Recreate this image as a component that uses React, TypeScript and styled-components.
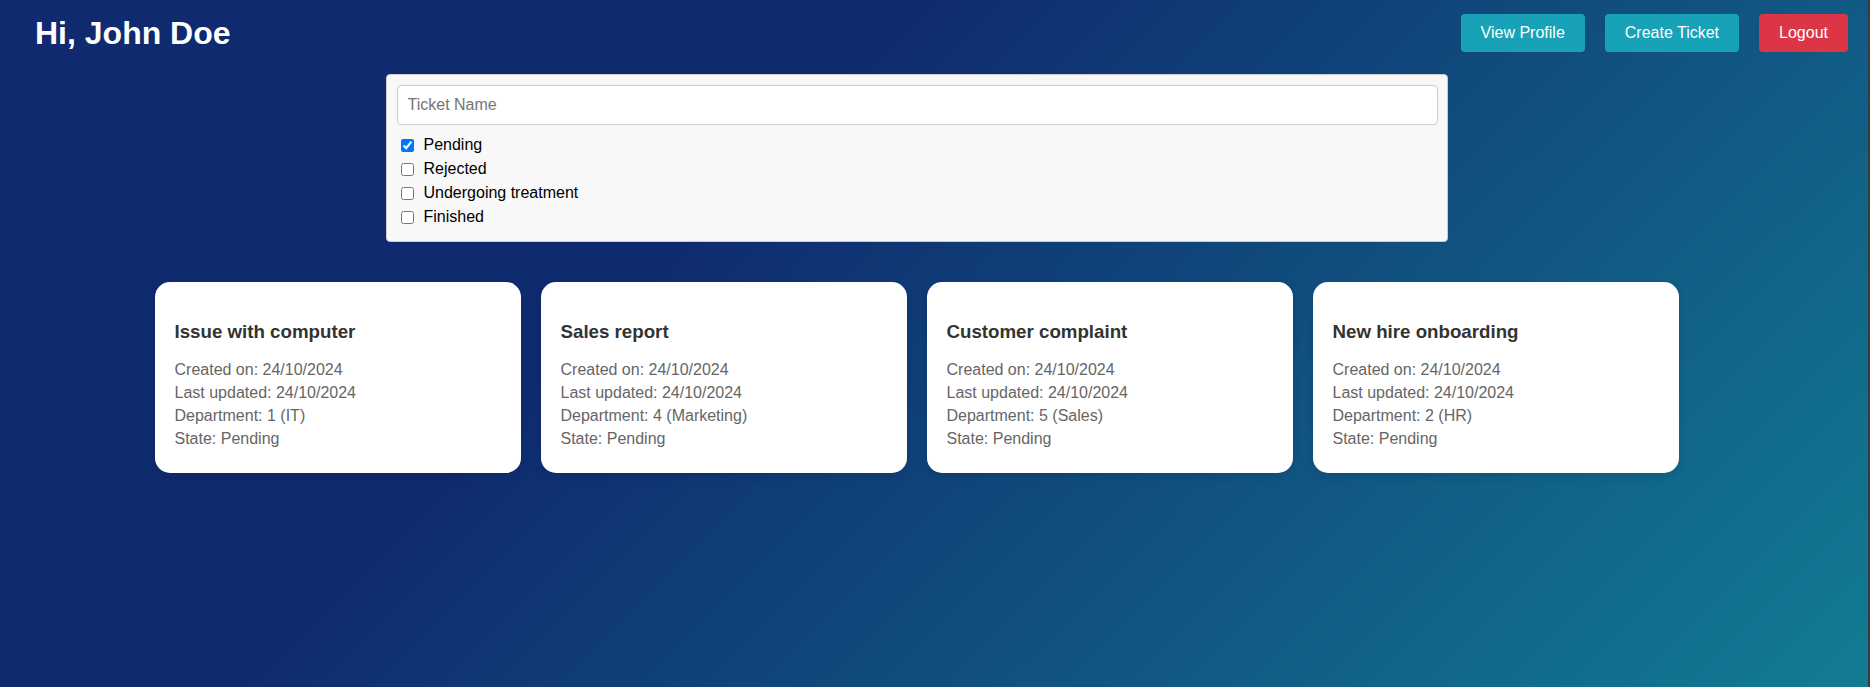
import React, { useState } from "react";
import styled, { createGlobalStyle } from "styled-components";

const GlobalStyle = createGlobalStyle`
  html, body {
    margin: 0;
    padding: 0;
    height: 100%;
  }
  body {
    font-family: "Liberation Sans", Arial, sans-serif;
    background: #3a3a3a;
  }
  * { box-sizing: border-box; }
`;

const Page = styled.div`
  min-height: 100vh;
  margin-right: 2px;
  background: linear-gradient(135deg, #0f2a6e 0%, #0f2b6f 36%, #127c93 100%);
`;

const Header = styled.header`
  display: flex;
  align-items: center;
  justify-content: space-between;
  padding: 14px 20px 0 35px;
`;

const Title = styled.h1`
  margin: 0;
  font-size: 32px;
  font-weight: bold;
  color: #ffffff;
`;

const Actions = styled.div`
  display: flex;
  gap: 20px;
`;

const Button = styled.button<{ $variant: "info" | "danger" }>`
  border: none;
  border-radius: 4px;
  padding: 10px 20px;
  font-family: "Liberation Sans", Arial, sans-serif;
  font-size: 16px;
  line-height: 18px;
  color: #ffffff;
  cursor: pointer;
  background: ${(p) => (p.$variant === "danger" ? "#dc3545" : "#17a2b8")};
`;

const Main = styled.main`
  width: 1833px;
  display: flex;
  flex-direction: column;
  align-items: center;
`;

const FilterPanel = styled.section`
  width: 1062px;
  margin-top: 22px;
  padding: 10px 9px 12px 10px;
  background: #f8f8f8;
  border: 1px solid #cccccc;
  border-radius: 4px;
`;

const SearchInput = styled.input`
  display: block;
  width: 100%;
  height: 40px;
  margin: 0 0 8px;
  padding: 0 10px;
  border: 1px solid #cccccc;
  border-radius: 4px;
  background: #ffffff;
  font-family: "Liberation Sans", Arial, sans-serif;
  font-size: 16px;
  color: #222;
  outline: none;
  &::placeholder {
    color: #757575;
  }
`;

const CheckRow = styled.label`
  display: flex;
  align-items: center;
  height: 24px;
  font-size: 16px;
  color: #000000;
  input {
    width: 13px;
    height: 13px;
    margin: 0 10px 0 4px;
  }
`;

const CardRow = styled.div`
  display: flex;
  gap: 20px;
  margin-top: 40px;
`;

const Card = styled.article`
  width: 366px;
  height: 191px;
  padding: 20px 20px;
  background: #ffffff;
  border-radius: 15px;
  box-shadow: 0 4px 8px rgba(0, 0, 0, 0.1);
`;

const CardTitle = styled.h3`
  margin: 18.72px 0;
  font-size: 18.72px;
  font-weight: bold;
  color: #333333;
`;

const CardLine = styled.p`
  margin: 5px 0;
  font-size: 16px;
  color: #666666;
`;

const states = ["Pending", "Rejected", "Undergoing treatment", "Finished"];

const tickets = [
  { name: "Issue with computer", dept: "1 (IT)" },
  { name: "Sales report", dept: "4 (Marketing)" },
  { name: "Customer complaint", dept: "5 (Sales)" },
  { name: "New hire onboarding", dept: "2 (HR)" },
];

export default function App() {
  const [checked, setChecked] = useState<Record<string, boolean>>({ Pending: true });
  return (
    <>
      <GlobalStyle />
      <Page>
        <Header>
          <Title>Hi, John Doe</Title>
          <Actions>
            <Button $variant="info">View Profile</Button>
            <Button $variant="info">Create Ticket</Button>
            <Button $variant="danger">Logout</Button>
          </Actions>
        </Header>
        <Main>
          <FilterPanel>
            <SearchInput placeholder="Ticket Name" />
            {states.map((s) => (
              <CheckRow key={s}>
                <input
                  type="checkbox"
                  checked={!!checked[s]}
                  onChange={() => setChecked({ ...checked, [s]: !checked[s] })}
                />
                {s}
              </CheckRow>
            ))}
          </FilterPanel>
          <CardRow>
            {tickets.map((t) => (
              <Card key={t.name}>
                <CardTitle>{t.name}</CardTitle>
                <CardLine>Created on: 24/10/2024</CardLine>
                <CardLine>Last updated: 24/10/2024</CardLine>
                <CardLine>Department: {t.dept}</CardLine>
                <CardLine>State: Pending</CardLine>
              </Card>
            ))}
          </CardRow>
        </Main>
      </Page>
    </>
  );
}
